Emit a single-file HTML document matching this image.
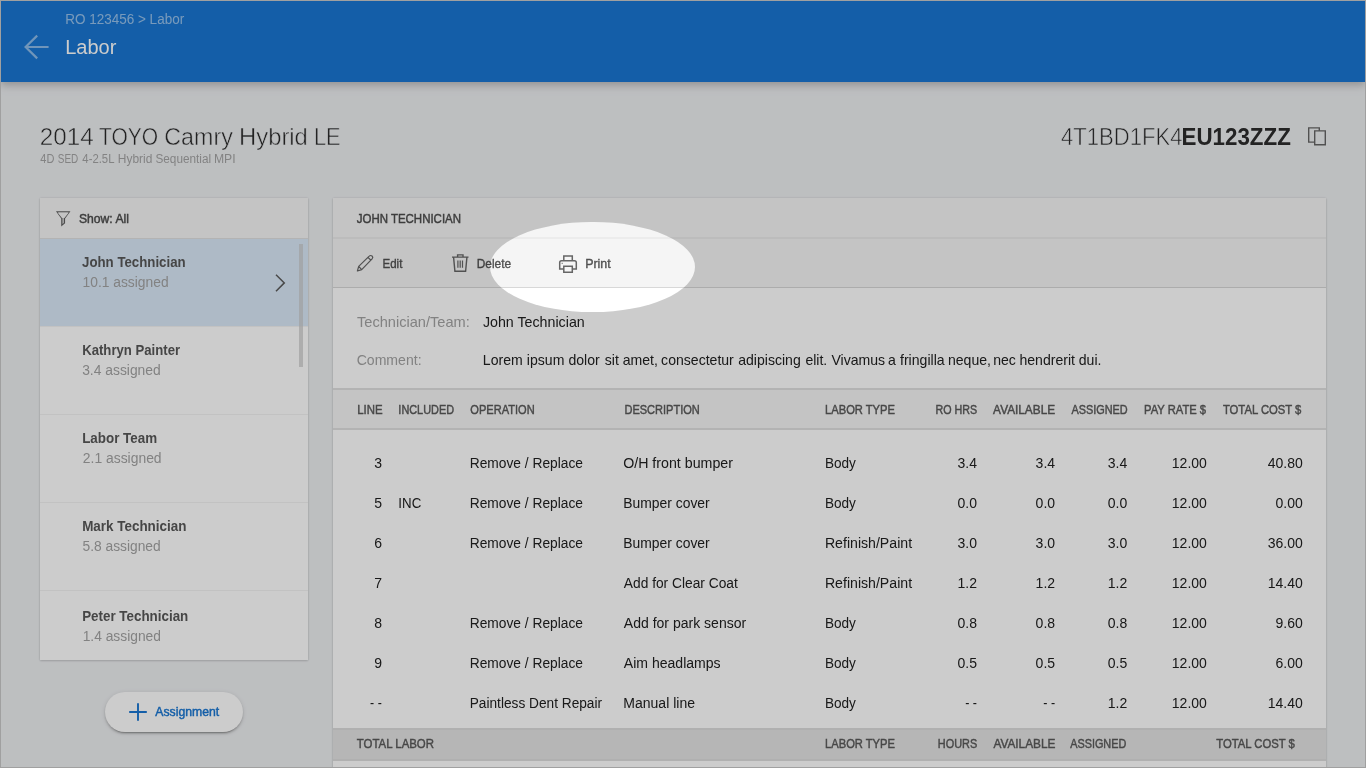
<!DOCTYPE html>
<html>
<head>
<meta charset="utf-8">
<title>Labor</title>
<style>
*{box-sizing:border-box;margin:0;padding:0}
html,body{width:1366px;height:768px;overflow:hidden;background:#edeff1}
body{font-family:"Liberation Sans",sans-serif;color:#212121;position:relative}
#root{position:absolute;left:0;top:0;width:1366px;height:768px;overflow:hidden;background:#edeff1}
.abs{position:absolute}
.t{position:absolute;white-space:nowrap;line-height:1;transform-origin:0 0}
#hdr{position:absolute;left:1px;top:1px;width:1364px;height:81px;background:#1976d2;
 box-shadow:0 3px 7px 0 rgba(0,0,0,.18),0 5px 12px 0 rgba(0,0,0,.06)}
.card{position:absolute;background:#fff;box-shadow:0 1px 2px 0 rgba(0,0,0,.14),0 0 2px 0 rgba(0,0,0,.12)}
.hl{position:absolute;height:1px;background:#e0e0e0}
#spot{position:absolute;left:490px;top:221.6px;width:204.8px;height:90.6px;border-radius:50%;
 box-shadow:0 0 0 3000px rgba(0,0,0,.2);z-index:10}
.frame{position:absolute;background:#a0a0a0;z-index:11}
svg{position:absolute;overflow:visible}
</style>
</head>
<body>
<div id="root">

<!-- HEADER -->
<div id="hdr"></div>
<svg id="ic-back" style="left:22px;top:33px" width="30" height="28" viewBox="0 0 30 28"><path d="M26.6 14H3.6M15.2 2.6L3.6 14l11.6 11.4" fill="none" stroke="rgba(255,255,255,.5)" stroke-width="2.2"/></svg>

<!-- VEHICLE -->
<svg id="ic-copy" style="left:1306px;top:125px" width="22" height="22" viewBox="0 0 22 22"><path d="M2.7 2.9h10.6v14.2H2.7z" fill="none" stroke="#666" stroke-width="1.4"/><path d="M8.7 5.9h10.6v13.8H8.7z" fill="#edeff1" stroke="#666" stroke-width="1.4"/></svg>

<!-- LEFT CARD -->
<div class="card" id="lcard" style="left:40px;top:198px;width:268px;height:462px;overflow:hidden">
  <div class="abs" style="left:0;top:0;width:269px;height:40px;background:#f5f5f5"></div>
  <div class="hl" style="left:0;top:40px;width:269px"></div>
  <div class="abs" style="left:0;top:41px;width:269px;height:87px;background:#dae9f8"></div>
  <div class="hl" style="left:0;top:216px;width:269px;background:#f3f3f3"></div>
  <div class="hl" style="left:0;top:304px;width:269px;background:#f3f3f3"></div>
  <div class="hl" style="left:0;top:392px;width:269px;background:#f3f3f3"></div>
  <div class="hl" style="left:0;top:128px;width:269px;background:#f3f3f3"></div>
  <div class="abs" style="left:259px;top:46px;width:4px;height:123px;background:rgba(200,200,200,.69)"></div>
</div>
<svg id="ic-filter" style="left:54px;top:209px" width="18" height="18" viewBox="0 0 18 18"><path d="M3.1 2.9H15.3L10.5 9.3V14.1L7.8 16.3V9.3z" fill="rgba(102,102,102,.25)" stroke="#606060" stroke-width="1.15" stroke-linejoin="miter"/><path d="M3.6 3.4h11.2l-4.4 5.6H8z" fill="#f5f5f5"/></svg>
<svg id="ic-chev" style="left:271.75px;top:272px" width="16" height="22" viewBox="0 0 16 22"><path d="M4 2.7l8.3 8.2L4 19.2" fill="none" stroke="#5c5c5c" stroke-width="1.5"/></svg>

<!-- ASSIGN BUTTON -->
<div class="abs" id="btn" style="left:105px;top:692px;width:138px;height:40px;border-radius:20px;background:#fff;box-shadow:0 3px 1px -2px rgba(0,0,0,.2),0 2px 2px 0 rgba(0,0,0,.14),0 1px 5px 0 rgba(0,0,0,.12)"></div>
<svg id="ic-plus" style="left:128px;top:702px" width="20" height="20" viewBox="0 0 20 20"><path d="M10 1.2v17.6M1.2 10h17.6" fill="none" stroke="#1976d2" stroke-width="1.9"/></svg>

<!-- RIGHT CARD -->
<div class="card" id="rcard" style="left:333px;top:198px;width:993px;height:580px">
  <div class="abs" style="left:0;top:0;width:993px;height:89px;background:#f5f5f5"></div>
  <div class="hl" style="left:0;top:39px;width:993px;height:2px;background:#ececec"></div>
  <div class="hl" style="left:0;top:89px;width:993px;background:#d8d8d8"></div>
  <div class="abs" style="left:0;top:190px;width:993px;height:42px;background:#f5f5f5;border-top:2px solid #e0e0e0;border-bottom:2px solid #e0e0e0"></div>
  <div class="abs" style="left:0;top:530px;width:993px;height:33px;background:#e4e4e4;border-top:2px solid #dcdcdc;border-bottom:2px solid #dcdcdc"></div>
</div>
<svg id="ic-edit" style="left:355px;top:253.4px" width="20" height="20" viewBox="0 0 20 20"><path d="M2.4 18l1.3-4.6L14.2 3.1a2 2 0 0 1 2.9 2.8L6.7 16.6zM3.7 13.4l3 3.2M13 4.4l2.9 2.8" fill="none" stroke="#666" stroke-width="1.2" stroke-linejoin="round"/></svg>
<svg id="ic-del" style="left:450px;top:252px" width="20" height="22" viewBox="0 0 20 22"><path d="M2 5.1h16.5M7.6 4.8V2.9h5.4v1.9M3.6 5.4l1.3 13.9h10.7l1.3-13.9" fill="none" stroke="#666" stroke-width="1.4"/><path d="M7.9 8.5v7.3M10.2 8.5v7.3M12.5 8.5v7.3" fill="none" stroke="#666" stroke-width="1.2"/></svg>
<svg id="ic-print" style="left:557px;top:253px;z-index:5" width="22" height="22" viewBox="0 0 22 22"><path d="M6.8 7.6V2.9h8.5v4.7M6.8 15.9H2.7V9.6a1.8 1.8 0 0 1 1.8-1.8h13a1.8 1.8 0 0 1 1.8 1.8v6.3h-4M6.8 13.3h8.5v5.9h-8.5z" fill="none" stroke="#666" stroke-width="1.5"/><path d="M4.6 10.3h1.2" stroke="#666" stroke-width="1"/></svg>

<div id="txt" style="position:absolute;left:0;top:0;width:1366px;height:768px;will-change:transform">
<div class="t" id="crumb" style="left:65px;top:12px;font-size:14px;color:rgba(255,255,255,.55);transform:translateX(0.14px) scaleX(0.9648)">RO 123456 &gt; Labor</div>
<div class="t" id="ttl" style="left:65px;top:37px;font-size:20px;color:#fff;transform:translateX(0.14px) scaleX(1.0002)">Labor</div>
<div class="t" id="veh_0" style="left:39px;top:125px;font-size:24.5px;color:#2a2a2a;transform:translateX(0.77px) scaleX(0.9878);-webkit-text-stroke:0.5px #edeff1">2014</div>
<div class="t" id="veh_1" style="left:98px;top:125px;font-size:24.5px;color:#2a2a2a;transform:translateX(0.92px) scaleX(0.8581);-webkit-text-stroke:0.5px #edeff1">TOYO</div>
<div class="t" id="veh_2" style="left:164px;top:125px;font-size:24.5px;color:#2a2a2a;transform:translateX(0.31px) scaleX(0.9488);-webkit-text-stroke:0.5px #edeff1">Camry</div>
<div class="t" id="veh_3" style="left:239px;top:125px;font-size:24.5px;color:#2a2a2a;transform:translateX(0.09px) scaleX(0.9710);-webkit-text-stroke:0.5px #edeff1">Hybrid</div>
<div class="t" id="veh_4" style="left:314px;top:125px;font-size:24.5px;color:#2a2a2a;transform:translateX(0.00px) scaleX(0.8881);-webkit-text-stroke:0.5px #edeff1">LE</div>
<div class="t" id="vsub_0" style="left:40px;top:153px;font-size:12.5px;color:#a4a4a4;transform:translateX(0.33px) scaleX(0.8795)">4D</div>
<div class="t" id="vsub_1" style="left:57px;top:153px;font-size:12.5px;color:#a4a4a4;transform:translateX(0.79px) scaleX(0.7959)">SED</div>
<div class="t" id="vsub_2" style="left:82px;top:153px;font-size:12.5px;color:#a4a4a4;transform:translateX(0.32px) scaleX(0.9074)">4-2.5L</div>
<div class="t" id="vsub_3" style="left:117px;top:153px;font-size:12.5px;color:#a4a4a4;transform:translateX(0.87px) scaleX(0.9552)">Hybrid</div>
<div class="t" id="vsub_4" style="left:155px;top:153px;font-size:12.5px;color:#a4a4a4;transform:translateX(0.43px) scaleX(0.9419)">Sequential</div>
<div class="t" id="vsub_5" style="left:213px;top:153px;font-size:12.5px;color:#a4a4a4;transform:translateX(0.95px) scaleX(0.9743)">MPI</div>
<div class="t" id="vin1" style="left:1061px;top:125px;font-size:24.5px;color:#2a2a2a;transform:translateX(0.05px) scaleX(0.9012);-webkit-text-stroke:0.6px #edeff1">4T1BD1FK4</div>
<div class="t" id="vin2" style="left:1181px;top:125px;font-size:24.5px;color:#2c2c2c;transform:translateX(0.50px) scaleX(0.9121);font-weight:bold">EU123ZZZ</div>
<div class="t" id="show" style="left:78px;top:213px;font-size:12.5px;color:#4d4d4d;transform:translateX(0.92px) scaleX(0.9727);-webkit-text-stroke:0.45px #4d4d4d">Show: All</div>
<div class="t" id="n0" style="left:82px;top:255px;font-size:14px;color:#585858;transform:translateX(0.06px) scaleX(0.9462);font-weight:bold">John Technician</div>
<div class="t" id="s0" style="left:82px;top:275px;font-size:14px;color:#a3a3a3;transform:translateX(0.54px) scaleX(0.9869)">10.1 assigned</div>
<div class="t" id="n1" style="left:82px;top:343px;font-size:14px;color:#585858;transform:translateX(0.18px) scaleX(0.9392);font-weight:bold">Kathryn Painter</div>
<div class="t" id="s1" style="left:82px;top:363px;font-size:14px;color:#a3a3a3;transform:translateX(0.17px) scaleX(0.9889)">3.4 assigned</div>
<div class="t" id="n2" style="left:82px;top:431px;font-size:14px;color:#585858;transform:translateX(0.16px) scaleX(0.9571);font-weight:bold">Labor Team</div>
<div class="t" id="s2" style="left:82px;top:451px;font-size:14px;color:#a3a3a3;transform:translateX(0.85px) scaleX(0.9917)">2.1 assigned</div>
<div class="t" id="n3" style="left:82px;top:519px;font-size:14px;color:#585858;transform:translateX(0.16px) scaleX(0.9597);font-weight:bold">Mark Technician</div>
<div class="t" id="s3" style="left:82px;top:539px;font-size:14px;color:#a3a3a3;transform:translateX(0.48px) scaleX(0.9851)">5.8 assigned</div>
<div class="t" id="n4" style="left:82px;top:609px;font-size:14px;color:#585858;transform:translateX(0.16px) scaleX(0.9559);font-weight:bold">Peter Technician</div>
<div class="t" id="s4" style="left:82px;top:629px;font-size:14px;color:#a3a3a3;transform:translateX(0.64px) scaleX(0.9869)">1.4 assigned</div>
<div class="t" id="asg" style="left:155px;top:706px;font-size:12.5px;color:#1976d2;transform:translateX(0.30px) scaleX(0.9778);-webkit-text-stroke:0.45px #1976d2">Assignment</div>
<div class="t" id="rh" style="left:356px;top:213px;font-size:12.5px;color:#4d4d4d;transform:translateX(0.72px) scaleX(0.9177);-webkit-text-stroke:0.45px #4d4d4d">JOHN TECHNICIAN</div>
<div class="t" id="edit" style="left:382px;top:258px;font-size:12.5px;color:#505050;transform:translateX(0.50px) scaleX(0.9221);-webkit-text-stroke:0.35px #505050">Edit</div>
<div class="t" id="del" style="left:476px;top:258px;font-size:12.5px;color:#505050;transform:translateX(0.67px) scaleX(0.9524);-webkit-text-stroke:0.35px #505050">Delete</div>
<div class="t" id="prn" style="left:585px;top:258px;font-size:12.5px;color:#505050;transform:translateX(0.13px) scaleX(0.9973);-webkit-text-stroke:0.35px #505050;z-index:5">Print</div>
<div class="t" id="l1" style="left:356px;top:315px;font-size:14.5px;color:#a3a3a3;transform:translateX(0.97px) scaleX(1.0073)">Technician/Team:</div>
<div class="t" id="v1" style="left:482px;top:315px;font-size:14.5px;color:#212121;transform:translateX(0.88px) scaleX(0.9821)">John Technician</div>
<div class="t" id="l2" style="left:356px;top:353px;font-size:14.5px;color:#a3a3a3;transform:translateX(0.64px) scaleX(0.9709)">Comment:</div>
<div class="t" id="v2_0" style="left:482px;top:353px;font-size:14.5px;color:#212121;transform:translateX(0.84px) scaleX(0.9697)">Lorem</div>
<div class="t" id="v2_1" style="left:526px;top:353px;font-size:14.5px;color:#212121;transform:translateX(0.87px) scaleX(0.9697)">ipsum</div>
<div class="t" id="v2_2" style="left:568px;top:353px;font-size:14.5px;color:#212121;transform:translateX(0.38px) scaleX(0.9697)">dolor</div>
<div class="t" id="v2_3" style="left:604px;top:353px;font-size:14.5px;color:#212121;transform:translateX(0.84px) scaleX(0.9697)">sit</div>
<div class="t" id="v2_4" style="left:622px;top:353px;font-size:14.5px;color:#212121;transform:translateX(0.67px) scaleX(0.9697)">amet,</div>
<div class="t" id="v2_5" style="left:661px;top:353px;font-size:14.5px;color:#212121;transform:translateX(0.12px) scaleX(0.9697)">consectetur</div>
<div class="t" id="v2_6" style="left:738px;top:353px;font-size:14.5px;color:#212121;transform:translateX(0.21px) scaleX(0.9697)">adipiscing</div>
<div class="t" id="v2_7" style="left:805px;top:353px;font-size:14.5px;color:#212121;transform:translateX(0.38px) scaleX(0.9697)">elit.</div>
<div class="t" id="v2_8" style="left:831px;top:353px;font-size:14.5px;color:#212121;transform:translateX(0.39px) scaleX(0.9697)">Vivamus</div>
<div class="t" id="v2_9" style="left:887px;top:353px;font-size:14.5px;color:#212121;transform:translateX(0.88px) scaleX(0.9697)">a</div>
<div class="t" id="v2_10" style="left:900px;top:353px;font-size:14.5px;color:#212121;transform:translateX(0.03px) scaleX(0.9697)">fringilla</div>
<div class="t" id="v2_11" style="left:947px;top:353px;font-size:14.5px;color:#212121;transform:translateX(0.93px) scaleX(0.9697)">neque,</div>
<div class="t" id="v2_12" style="left:993px;top:353px;font-size:14.5px;color:#212121;transform:translateX(0.14px) scaleX(0.9697)">nec</div>
<div class="t" id="v2_13" style="left:1019px;top:353px;font-size:14.5px;color:#212121;transform:translateX(0.44px) scaleX(0.9697)">hendrerit</div>
<div class="t" id="v2_14" style="left:1078px;top:353px;font-size:14.5px;color:#212121;transform:translateX(0.78px) scaleX(0.9697)">dui.</div>
<div class="t" id="h0" style="left:357px;top:404px;font-size:12.5px;color:#5a5a5a;transform:translateX(0.21px) scaleX(0.9130);-webkit-text-stroke:0.45px #5a5a5a">LINE</div>
<div class="t" id="h1" style="left:398px;top:404px;font-size:12.5px;color:#5a5a5a;transform:translateX(0.37px) scaleX(0.8707);-webkit-text-stroke:0.45px #5a5a5a">INCLUDED</div>
<div class="t" id="h2" style="left:470px;top:404px;font-size:12.5px;color:#5a5a5a;transform:translateX(0.37px) scaleX(0.8852);-webkit-text-stroke:0.45px #5a5a5a">OPERATION</div>
<div class="t" id="h3" style="left:624px;top:404px;font-size:12.5px;color:#5a5a5a;transform:translateX(0.44px) scaleX(0.8825);-webkit-text-stroke:0.45px #5a5a5a">DESCRIPTION</div>
<div class="t" id="h4" style="left:825px;top:404px;font-size:12.5px;color:#5a5a5a;transform:translateX(0.03px) scaleX(0.8936);-webkit-text-stroke:0.45px #5a5a5a">LABOR TYPE</div>
<div class="t" id="h5" style="left:935px;top:404px;font-size:12.5px;color:#5a5a5a;transform:translateX(0.46px) scaleX(0.8575);-webkit-text-stroke:0.45px #5a5a5a">RO HRS</div>
<div class="t" id="h6" style="left:993px;top:404px;font-size:12.5px;color:#5a5a5a;transform:translateX(0.12px) scaleX(0.9456);-webkit-text-stroke:0.45px #5a5a5a">AVAILABLE</div>
<div class="t" id="h7" style="left:1071px;top:404px;font-size:12.5px;color:#5a5a5a;transform:translateX(0.41px) scaleX(0.8711);-webkit-text-stroke:0.45px #5a5a5a">ASSIGNED</div>
<div class="t" id="h8" style="left:1144px;top:404px;font-size:12.5px;color:#5a5a5a;transform:translateX(0.03px) scaleX(0.8951);-webkit-text-stroke:0.45px #5a5a5a">PAY RATE $</div>
<div class="t" id="h9" style="left:1222px;top:404px;font-size:12.5px;color:#5a5a5a;transform:translateX(0.92px) scaleX(0.9012);-webkit-text-stroke:0.45px #5a5a5a">TOTAL COST $</div>
<div class="t" id="f0" style="left:356px;top:738px;font-size:12.5px;color:#5a5a5a;transform:translateX(0.82px) scaleX(0.9129);-webkit-text-stroke:0.45px #5a5a5a">TOTAL LABOR</div>
<div class="t" id="f1" style="left:825px;top:738px;font-size:12.5px;color:#5a5a5a;transform:translateX(0.03px) scaleX(0.8936);-webkit-text-stroke:0.45px #5a5a5a">LABOR TYPE</div>
<div class="t" id="f2" style="left:937px;top:738px;font-size:12.5px;color:#5a5a5a;transform:translateX(0.85px) scaleX(0.8708);-webkit-text-stroke:0.45px #5a5a5a">HOURS</div>
<div class="t" id="f3" style="left:993px;top:738px;font-size:12.5px;color:#5a5a5a;transform:translateX(0.40px) scaleX(0.9459);-webkit-text-stroke:0.45px #5a5a5a">AVAILABLE</div>
<div class="t" id="f4" style="left:1070px;top:738px;font-size:12.5px;color:#5a5a5a;transform:translateX(0.20px) scaleX(0.8681);-webkit-text-stroke:0.45px #5a5a5a">ASSIGNED</div>
<div class="t" id="f5" style="left:1216px;top:738px;font-size:12.5px;color:#5a5a5a;transform:translateX(0.22px) scaleX(0.9035);-webkit-text-stroke:0.45px #5a5a5a">TOTAL COST $</div>
<div class="t" id="r0ln" style="left:374px;top:456px;font-size:14px;color:#212121;transform:translateX(0.34px) scaleX(1.0000)">3</div>
<div class="t" id="r0op" style="left:469px;top:456px;font-size:14px;color:#212121;transform:translateX(0.72px) scaleX(0.9834)">Remove / Replace</div>
<div class="t" id="r0ds" style="left:623px;top:456px;font-size:14px;color:#212121;transform:translateX(0.13px) scaleX(1.0156)">O/H front bumper</div>
<div class="t" id="r0lt" style="left:824px;top:456px;font-size:14px;color:#212121;transform:translateX(0.94px) scaleX(0.9703)">Body</div>
<div class="t" id="r0c0" style="left:957px;top:456px;font-size:14px;color:#212121;transform:translateX(0.50px) scaleX(1.0000)">3.4</div>
<div class="t" id="r0c1" style="left:1035px;top:456px;font-size:14px;color:#212121;transform:translateX(0.60px) scaleX(1.0000)">3.4</div>
<div class="t" id="r0c2" style="left:1107px;top:456px;font-size:14px;color:#212121;transform:translateX(0.80px) scaleX(1.0000)">3.4</div>
<div class="t" id="r0c3" style="left:1171px;top:456px;font-size:14px;color:#212121;transform:translateX(0.83px) scaleX(1.0000)">12.00</div>
<div class="t" id="r0c4" style="left:1267px;top:456px;font-size:14px;color:#212121;transform:translateX(0.73px) scaleX(1.0000)">40.80</div>
<div class="t" id="r1ln" style="left:374px;top:496px;font-size:14px;color:#212121;transform:translateX(0.34px) scaleX(1.0000)">5</div>
<div class="t" id="r1inc" style="left:398px;top:496px;font-size:14px;color:#212121;transform:translateX(0.36px) scaleX(0.9498)">INC</div>
<div class="t" id="r1op" style="left:469px;top:496px;font-size:14px;color:#212121;transform:translateX(0.72px) scaleX(0.9834)">Remove / Replace</div>
<div class="t" id="r1ds" style="left:623px;top:496px;font-size:14px;color:#212121;transform:translateX(0.32px) scaleX(0.9911)">Bumper cover</div>
<div class="t" id="r1lt" style="left:824px;top:496px;font-size:14px;color:#212121;transform:translateX(0.94px) scaleX(0.9703)">Body</div>
<div class="t" id="r1c0" style="left:957px;top:496px;font-size:14px;color:#212121;transform:translateX(0.50px) scaleX(1.0000)">0.0</div>
<div class="t" id="r1c1" style="left:1035px;top:496px;font-size:14px;color:#212121;transform:translateX(0.60px) scaleX(1.0000)">0.0</div>
<div class="t" id="r1c2" style="left:1107px;top:496px;font-size:14px;color:#212121;transform:translateX(0.80px) scaleX(1.0000)">0.0</div>
<div class="t" id="r1c3" style="left:1171px;top:496px;font-size:14px;color:#212121;transform:translateX(0.83px) scaleX(1.0000)">12.00</div>
<div class="t" id="r1c4" style="left:1275px;top:496px;font-size:14px;color:#212121;transform:translateX(0.51px) scaleX(1.0000)">0.00</div>
<div class="t" id="r2ln" style="left:374px;top:536px;font-size:14px;color:#212121;transform:translateX(0.34px) scaleX(1.0000)">6</div>
<div class="t" id="r2op" style="left:469px;top:536px;font-size:14px;color:#212121;transform:translateX(0.72px) scaleX(0.9834)">Remove / Replace</div>
<div class="t" id="r2ds" style="left:623px;top:536px;font-size:14px;color:#212121;transform:translateX(0.32px) scaleX(0.9911)">Bumper cover</div>
<div class="t" id="r2lt" style="left:824px;top:536px;font-size:14px;color:#212121;transform:translateX(0.90px) scaleX(1.0090)">Refinish/Paint</div>
<div class="t" id="r2c0" style="left:957px;top:536px;font-size:14px;color:#212121;transform:translateX(0.50px) scaleX(1.0000)">3.0</div>
<div class="t" id="r2c1" style="left:1035px;top:536px;font-size:14px;color:#212121;transform:translateX(0.60px) scaleX(1.0000)">3.0</div>
<div class="t" id="r2c2" style="left:1107px;top:536px;font-size:14px;color:#212121;transform:translateX(0.80px) scaleX(1.0000)">3.0</div>
<div class="t" id="r2c3" style="left:1171px;top:536px;font-size:14px;color:#212121;transform:translateX(0.83px) scaleX(1.0000)">12.00</div>
<div class="t" id="r2c4" style="left:1267px;top:536px;font-size:14px;color:#212121;transform:translateX(0.73px) scaleX(1.0000)">36.00</div>
<div class="t" id="r3ln" style="left:374px;top:576px;font-size:14px;color:#212121;transform:translateX(0.34px) scaleX(1.0000)">7</div>
<div class="t" id="r3ds" style="left:623px;top:576px;font-size:14px;color:#212121;transform:translateX(0.80px) scaleX(0.9837)">Add for Clear Coat</div>
<div class="t" id="r3lt" style="left:824px;top:576px;font-size:14px;color:#212121;transform:translateX(0.90px) scaleX(1.0090)">Refinish/Paint</div>
<div class="t" id="r3c0" style="left:957px;top:576px;font-size:14px;color:#212121;transform:translateX(0.50px) scaleX(1.0000)">1.2</div>
<div class="t" id="r3c1" style="left:1035px;top:576px;font-size:14px;color:#212121;transform:translateX(0.60px) scaleX(1.0000)">1.2</div>
<div class="t" id="r3c2" style="left:1107px;top:576px;font-size:14px;color:#212121;transform:translateX(0.80px) scaleX(1.0000)">1.2</div>
<div class="t" id="r3c3" style="left:1171px;top:576px;font-size:14px;color:#212121;transform:translateX(0.83px) scaleX(1.0000)">12.00</div>
<div class="t" id="r3c4" style="left:1267px;top:576px;font-size:14px;color:#212121;transform:translateX(0.73px) scaleX(1.0000)">14.40</div>
<div class="t" id="r4ln" style="left:374px;top:616px;font-size:14px;color:#212121;transform:translateX(0.34px) scaleX(1.0000)">8</div>
<div class="t" id="r4op" style="left:469px;top:616px;font-size:14px;color:#212121;transform:translateX(0.72px) scaleX(0.9834)">Remove / Replace</div>
<div class="t" id="r4ds" style="left:623px;top:616px;font-size:14px;color:#212121;transform:translateX(0.80px) scaleX(1.0016)">Add for park sensor</div>
<div class="t" id="r4lt" style="left:824px;top:616px;font-size:14px;color:#212121;transform:translateX(0.94px) scaleX(0.9703)">Body</div>
<div class="t" id="r4c0" style="left:957px;top:616px;font-size:14px;color:#212121;transform:translateX(0.50px) scaleX(1.0000)">0.8</div>
<div class="t" id="r4c1" style="left:1035px;top:616px;font-size:14px;color:#212121;transform:translateX(0.60px) scaleX(1.0000)">0.8</div>
<div class="t" id="r4c2" style="left:1107px;top:616px;font-size:14px;color:#212121;transform:translateX(0.80px) scaleX(1.0000)">0.8</div>
<div class="t" id="r4c3" style="left:1171px;top:616px;font-size:14px;color:#212121;transform:translateX(0.83px) scaleX(1.0000)">12.00</div>
<div class="t" id="r4c4" style="left:1275px;top:616px;font-size:14px;color:#212121;transform:translateX(0.51px) scaleX(1.0000)">9.60</div>
<div class="t" id="r5ln" style="left:374px;top:656px;font-size:14px;color:#212121;transform:translateX(0.34px) scaleX(1.0000)">9</div>
<div class="t" id="r5op" style="left:469px;top:656px;font-size:14px;color:#212121;transform:translateX(0.72px) scaleX(0.9834)">Remove / Replace</div>
<div class="t" id="r5ds" style="left:623px;top:656px;font-size:14px;color:#212121;transform:translateX(0.80px) scaleX(1.0036)">Aim headlamps</div>
<div class="t" id="r5lt" style="left:824px;top:656px;font-size:14px;color:#212121;transform:translateX(0.94px) scaleX(0.9703)">Body</div>
<div class="t" id="r5c0" style="left:957px;top:656px;font-size:14px;color:#212121;transform:translateX(0.50px) scaleX(1.0000)">0.5</div>
<div class="t" id="r5c1" style="left:1035px;top:656px;font-size:14px;color:#212121;transform:translateX(0.60px) scaleX(1.0000)">0.5</div>
<div class="t" id="r5c2" style="left:1107px;top:656px;font-size:14px;color:#212121;transform:translateX(0.80px) scaleX(1.0000)">0.5</div>
<div class="t" id="r5c3" style="left:1171px;top:656px;font-size:14px;color:#212121;transform:translateX(0.83px) scaleX(1.0000)">12.00</div>
<div class="t" id="r5c4" style="left:1275px;top:656px;font-size:14px;color:#212121;transform:translateX(0.51px) scaleX(1.0000)">6.00</div>
<div class="t" id="r6ln" style="left:370px;top:696px;font-size:14px;color:#212121;transform:translateX(0.11px) scaleX(0.8819)">- -</div>
<div class="t" id="r6op" style="left:469px;top:696px;font-size:14px;color:#212121;transform:translateX(0.73px) scaleX(0.9775)">Paintless Dent Repair</div>
<div class="t" id="r6ds" style="left:623px;top:696px;font-size:14px;color:#212121;transform:translateX(0.31px) scaleX(1.0009)">Manual line</div>
<div class="t" id="r6lt" style="left:824px;top:696px;font-size:14px;color:#212121;transform:translateX(0.94px) scaleX(0.9703)">Body</div>
<div class="t" id="r6c0" style="left:965px;top:696px;font-size:14px;color:#212121;transform:translateX(0.21px) scaleX(0.8933)">- -</div>
<div class="t" id="r6c1" style="left:1043px;top:696px;font-size:14px;color:#212121;transform:translateX(0.31px) scaleX(0.8933)">- -</div>
<div class="t" id="r6c2" style="left:1107px;top:696px;font-size:14px;color:#212121;transform:translateX(0.80px) scaleX(1.0000)">1.2</div>
<div class="t" id="r6c3" style="left:1171px;top:696px;font-size:14px;color:#212121;transform:translateX(0.83px) scaleX(1.0000)">12.00</div>
<div class="t" id="r6c4" style="left:1267px;top:696px;font-size:14px;color:#212121;transform:translateX(0.73px) scaleX(1.0000)">14.40</div>
</div>

<!-- OVERLAY -->
<div id="spot"></div>

<!-- FRAME -->
<div class="frame" style="left:0;top:0;width:1366px;height:1px"></div>
<div class="frame" style="left:0;top:0;width:1px;height:82px"></div>
<div class="frame" style="left:0;top:82px;width:1px;height:686px"></div>
<div class="frame" style="left:1365px;top:0;width:1px;height:82px"></div>
<div class="frame" style="left:1365px;top:82px;width:1px;height:686px"></div>
<div class="frame" style="left:0;top:767px;width:1366px;height:1px"></div>
</div>
</body>
</html>
